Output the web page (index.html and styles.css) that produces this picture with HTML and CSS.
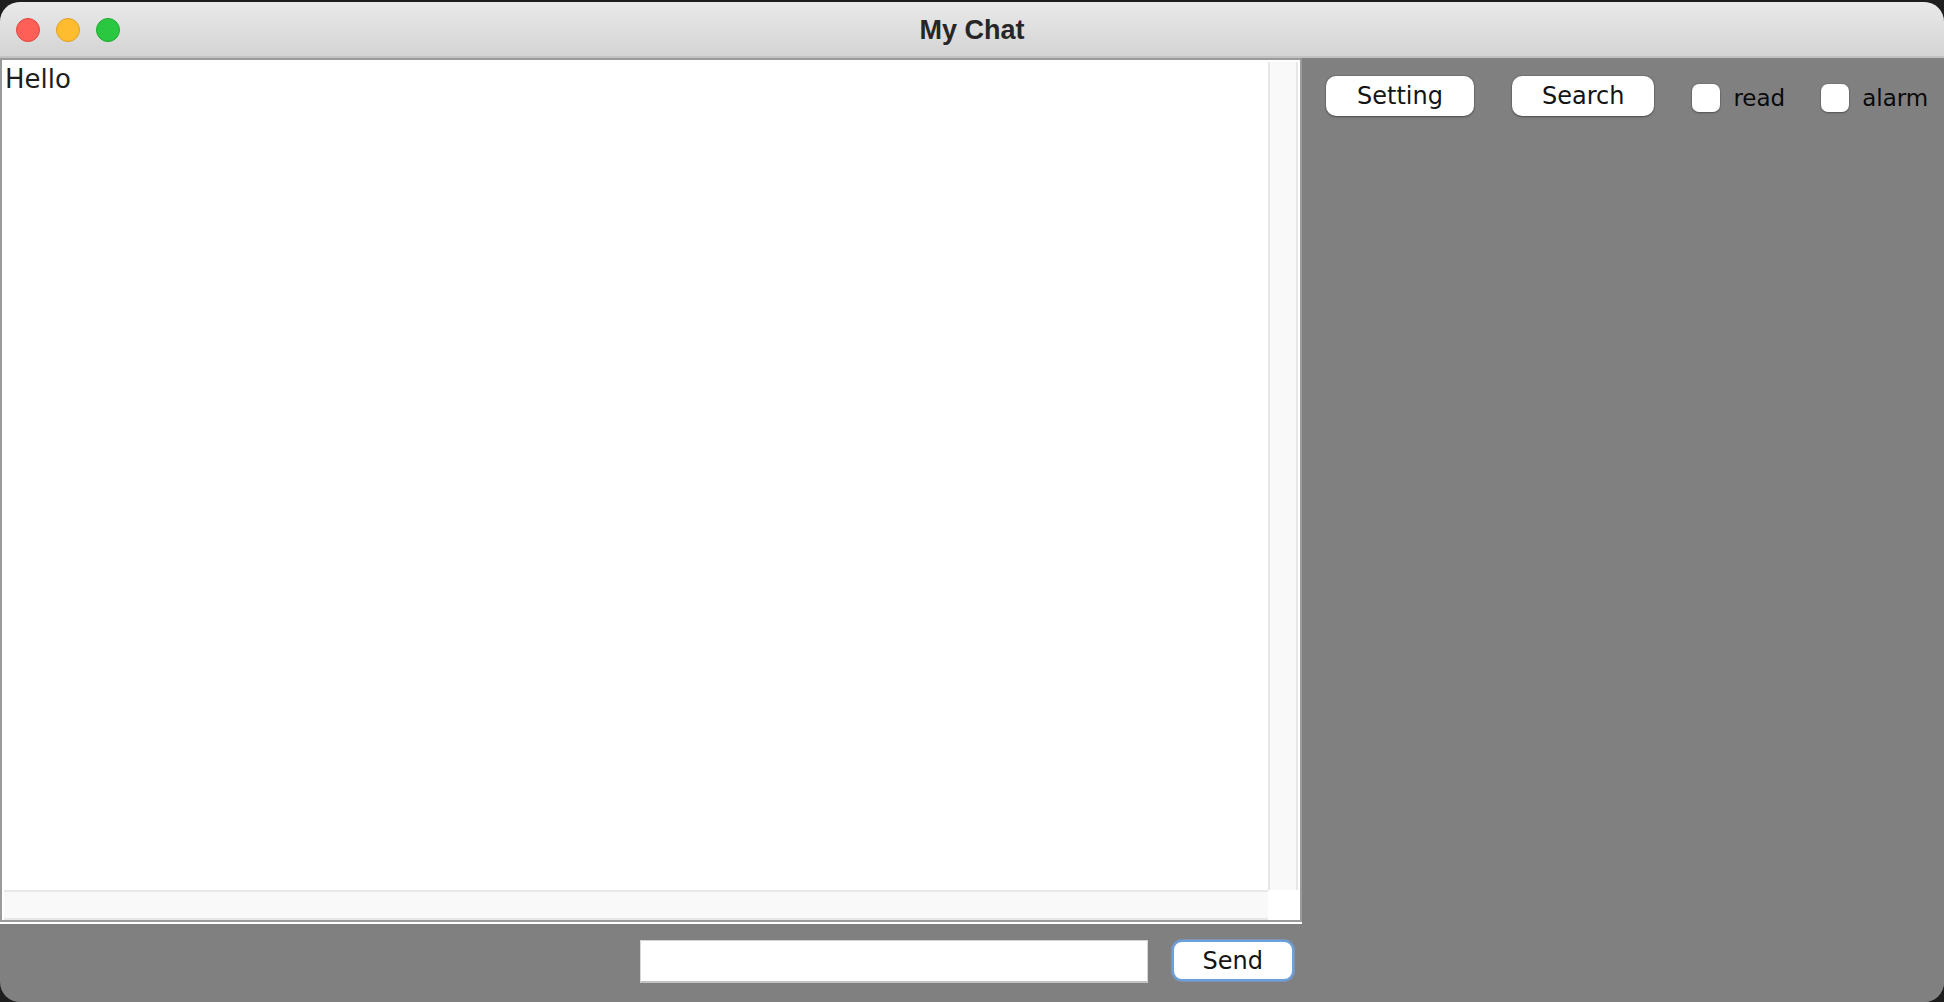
FILE: index.html
```html
<!DOCTYPE html>
<html lang="en">
<head>
<meta charset="utf-8">
<title>My Chat</title>
<link rel="stylesheet" href="styles.css">
</head>
<body>
<div class="window">
  <header class="titlebar">
    <div class="lights">
      <span class="light red"></span>
      <span class="light yellow"></span>
      <span class="light green"></span>
    </div>
    <div class="title">My Chat</div>
    <div class="spacer"></div>
  </header>
  <main class="content">
    <section class="left">
      <div class="pane-wrap">
        <div class="pane">
          <div class="viewport"><div class="message">Hello</div></div>
          <div class="vscroll"></div>
          <div class="hscroll"></div>
          <div class="corner"></div>
        </div>
      </div>
      <div class="inputbar">
        <input class="field" type="text" aria-label="message">
        <button class="btn send" type="button">Send</button>
      </div>
    </section>
    <aside class="right">
      <div class="toolbar">
        <button class="btn" type="button">Setting</button>
        <button class="btn search" type="button">Search</button>
        <label class="check"><span class="box"></span><span>read</span></label>
        <label class="check"><span class="box"></span><span>alarm</span></label>
      </div>
    </aside>
  </main>
</div>
</body>
</html>
```

FILE: styles.css
```css
html, body {
  margin: 0;
  padding: 0;
  background: #1e1e1e;
  height: 100%;
  overflow: hidden;
}

.window {
  margin-top: 2px;
  width: 1944px;
  height: 1000px;
  border-radius: 20px;
  overflow: hidden;
  display: flex;
  flex-direction: column;
  background: #808080;
  font-family: "DejaVu Sans", sans-serif;
}

.titlebar {
  height: 54px;
  flex: 0 0 auto;
  display: grid;
  grid-template-columns: 1fr auto 1fr;
  align-items: center;
  background: linear-gradient(#e9e9e9, #d4d4d4);
  border-bottom: 2px solid #c2c2c2;
}

.lights {
  display: flex;
  gap: 16px;
  padding-left: 16px;
  padding-top: 2px;
}

.light {
  width: 22px;
  height: 22px;
  border-radius: 50%;
  border: 1px solid transparent;
}
.red { background: #fe5f57; border-color: #e2463f; }
.yellow { background: #febc2e; border-color: #dfa023; }
.green { background: #2ac840; border-color: #1eab2c; }

.title {
  font-family: "Liberation Sans", Arial, sans-serif;
  font-weight: bold;
  font-size: 27px;
  color: #262626;
  padding-top: 2px;
}

.content {
  flex: 1 1 auto;
  display: flex;
  min-height: 0;
}

.left {
  width: 1302px;
  flex: 0 0 auto;
  display: flex;
  flex-direction: column;
}

.pane-wrap {
  height: 866px;
  background: #fff;
  padding-bottom: 2px;
  box-sizing: border-box;
}

.pane {
  height: 864px;
  box-sizing: border-box;
  border: 2px solid #9a9a9a;
  background: #fff;
  padding: 2px 2px 0 2px;
  display: grid;
  grid-template-columns: 1fr 30px;
  grid-template-rows: 1fr 30px;
}

.viewport {
  overflow: hidden;
}

.message {
  font-size: 26px;
  color: #1e1e1e;
  padding: 2px 1px;
  line-height: 30px;
}

.vscroll {
  background: #f9f9f9;
  border-left: 2px solid #e7e7e7;
  border-right: 2px solid #e7e7e7;
}

.hscroll {
  background: #f9f9f9;
  border-top: 2px solid #e7e7e7;
  border-bottom: 2px solid #e7e7e7;
}

.corner {
  background: #fff;
}

.inputbar {
  flex: 1 1 auto;
  display: flex;
  justify-content: flex-end;
  align-items: flex-start;
  gap: 24px;
  padding: 16px 8px 0 0;
}

.field {
  width: 508px;
  height: 43px;
  box-sizing: border-box;
  margin: 0;
  background: #fff;
  border: 1px solid #d6d6d6;
  border-bottom: 2px solid #c2c2c2;
  outline: none;
}

.btn {
  font-family: "DejaVu Sans", sans-serif;
  font-size: 24px;
  color: #141414;
  background: #fff;
  border: none;
  border-radius: 10px;
  height: 40px;
  padding: 0 31px;
  margin: 0;
  box-shadow: 0 0 0 1px rgba(0, 0, 0, 0.1), 0 1px 2px rgba(0, 0, 0, 0.35);
}

.search {
  padding: 0 30px;
}

.send {
  height: 41px;
  padding: 0 29px;
  border: 2px solid #6a9fe0;
  box-shadow: 0 0 0 1px rgba(120, 165, 225, 0.5);
}

.right {
  flex: 1 1 auto;
  background: #808080;
}

.toolbar {
  display: flex;
  align-items: center;
  gap: 38px;
  padding: 18px 0 0 24px;
}

.check {
  display: flex;
  align-items: center;
  gap: 13px;
  font-size: 23px;
  color: #0a0a0a;
  margin-top: 4px;
}

.check + .check {
  margin-left: -2px;
}

.box {
  width: 28px;
  height: 28px;
  border-radius: 7px;
  background: #fff;
  box-shadow: 0 0 0 1px rgba(0, 0, 0, 0.08), 0 1px 2px rgba(0, 0, 0, 0.3);
}
```
